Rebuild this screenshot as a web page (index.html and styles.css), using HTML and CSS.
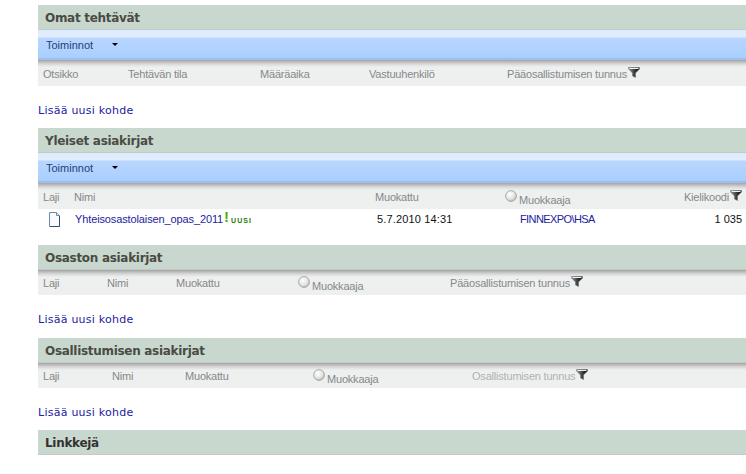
FILE: index.html
```html
<!DOCTYPE html>
<html lang="fi">
<head>
  <meta charset="UTF-8">
  <meta name="viewport" content="width=device-width, initial-scale=1.0">
  <title>Omat tehtävät</title>
  <link rel="stylesheet" href="styles.css">
</head>
<body>
  <svg class="defs" width="0" height="0">
    <defs>
      <linearGradient id="funnelFill" x1="0" y1="0" x2="1" y2="0">
        <stop offset="0" stop-color="#9a9a9a"/>
        <stop offset="0.5" stop-color="#444"/>
        <stop offset="1" stop-color="#000"/>
      </linearGradient>
      <radialGradient id="knobFill" cx="0.4" cy="0.35" r="0.7">
        <stop offset="0" stop-color="#fff"/>
        <stop offset="0.6" stop-color="#e4e4e4"/>
        <stop offset="1" stop-color="#b5b5b5"/>
      </radialGradient>
      <symbol id="funnel" viewBox="0 0 12 11">
        <path d="M0.5 0.5H11.5V2L7.5 6V10.5L4.5 9V6L0.5 2Z" fill="url(#funnelFill)" stroke="#666" stroke-width="0.5"/>
        <path d="M1.5 1H10.5V2H1.5Z" fill="#f2f2f2"/>
      </symbol>
      <symbol id="knob" viewBox="0 0 12 12">
        <circle cx="6" cy="6" r="5.4" fill="url(#knobFill)" stroke="#9a9a9a" stroke-width="0.8"/>
      </symbol>
    </defs>
  </svg>

  <section class="webpart">
    <h2 class="title">Omat tehtävät</h2>
    <div class="toolbar"><span class="menu">Toiminnot</span><span class="arrow"></span></div>
    <div class="cols cols-tasks">
      <span>Otsikko</span>
      <span>Tehtävän tila</span>
      <span>Määräaika</span>
      <span>Vastuuhenkilö</span>
      <span>Pääosallistumisen tunnus<svg class="funnel"><use href="#funnel"/></svg></span>
    </div>
    <a class="add" href="#">Lisää uusi kohde</a>
  </section>

  <section class="webpart">
    <h2 class="title">Yleiset asiakirjat</h2>
    <div class="toolbar"><span class="menu">Toiminnot</span><span class="arrow"></span></div>
    <div class="cols cols-general">
      <span>Laji</span>
      <span>Nimi</span>
      <span>Muokattu</span>
      <span class="editor"><svg class="knob"><use href="#knob"/></svg><span>Muokkaaja</span></span>
      <span class="right">Kielikoodi<svg class="funnel"><use href="#funnel"/></svg></span>
    </div>
    <div class="row cols-general">
      <svg class="doc" viewBox="0 0 13 15" width="13" height="15">
        <path d="M1.5 0.5H8.5L11.5 3.5V14.5H1.5Z" fill="#f8fafd" stroke="#6f88a8"/>
        <path d="M8.5 0.5V3.5H11.5" fill="#dfe8f2" stroke="#6f88a8"/>
        <path d="M11.5 4V14.5H2" fill="none" stroke="#2f4f78"/>
      </svg>
      <span class="name"><a href="#">Yhteisosastolaisen_opas_2011</a><span class="new"><b>!</b>UUSI</span></span>
      <span class="date">5.7.2010 14:31</span>
      <a class="user" href="#">FINNEXPO\HSA</a>
      <span class="right code">1 035</span>
    </div>
  </section>

  <section class="webpart">
    <h2 class="title">Osaston asiakirjat</h2>
    <div class="cols cols-dept flush">
      <span>Laji</span>
      <span>Nimi</span>
      <span>Muokattu</span>
      <span class="editor"><svg class="knob"><use href="#knob"/></svg><span>Muokkaaja</span></span>
      <span>Pääosallistumisen tunnus<svg class="funnel"><use href="#funnel"/></svg></span>
    </div>
    <a class="add add-tall" href="#">Lisää uusi kohde</a>
  </section>

  <section class="webpart">
    <h2 class="title">Osallistumisen asiakirjat</h2>
    <div class="cols cols-part flush">
      <span>Laji</span>
      <span>Nimi</span>
      <span>Muokattu</span>
      <span class="editor"><svg class="knob"><use href="#knob"/></svg><span>Muokkaaja</span></span>
      <span class="dim">Osallistumisen tunnus<svg class="funnel"><use href="#funnel"/></svg></span>
    </div>
    <a class="add" href="#">Lisää uusi kohde</a>
  </section>

  <section class="webpart">
    <h2 class="title title-dark">Linkkejä</h2>
  </section>
</body>
</html>
```

FILE: styles.css
```css
body {
  margin: 0;
  padding: 5px 0 0 38px;
  background-color: #fff;
  font-family: "Liberation Sans", Arial, sans-serif;
  font-size: 11px;
  overflow: hidden;
}

.defs {
  position: absolute;
}

a {
  color: #2222a0;
  text-decoration: none;
}

.title {
  height: 25px;
  margin: 0;
  padding: 2px 0 0 7px;
  background-color: #c9d8ce;
  border-bottom: 1px solid #c4c8c6;
  box-sizing: border-box;
  color: #4b4b45;
  font-family: "DejaVu Sans", Verdana, sans-serif;
  font-size: 12px;
  font-weight: bold;
  letter-spacing: -0.3px;
  line-height: 23px;
}

.title-dark {
  color: #333;
}

.toolbar {
  display: flex;
  align-items: center;
  height: 30px;
  padding: 0 0 0 8px;
  background: linear-gradient(#dcebfe 0, #e2edfe 7px, #b9d6fe 8px, #a9cfff 28px, #a9cfff 28px, #7fb0ee 29px, #ccd 30px);
  box-sizing: border-box;
}

.menu {
  width: 66px;
  color: #1f3f78;
  font-size: 11px;
}

.arrow {
  width: 0;
  height: 0;
  margin-top: -2px;
  border-top: 3px solid #000;
  border-left: 3px solid transparent;
  border-right: 3px solid transparent;
}

.cols {
  display: grid;
  height: 26px;
  padding-left: 5px;
  background: linear-gradient(#a3a3a3 0, #d8d8d8 4px, #eef0ef 7px);
  box-sizing: border-box;
  color: #85888a;
  letter-spacing: -0.2px;
  line-height: 14px;
  padding-top: 7px;
  white-space: nowrap;
}

.flush {
  height: 25px;
  padding-top: 6px;
}

.cols-tasks {
  grid-template-columns: 85px 132px 109px 138px 1fr;
}

.cols-general {
  grid-template-columns: 31px 301px 130px 1fr 120px;
}

.cols-dept {
  grid-template-columns: 64px 69px 122px 152px 1fr;
}

.cols-part {
  grid-template-columns: 69px 73px 128px 159px 1fr;
}

.funnel {
  width: 12px;
  height: 11px;
  margin-left: 1px;
  vertical-align: 0;
}

.knob {
  width: 12px;
  height: 12px;
  margin-right: 2px;
}

.editor {
  display: flex;
  align-items: flex-start;
}

.editor span {
  margin-top: 3px;
}

.right {
  padding-right: 4px;
  text-align: right;
}

.dim {
  color: #adb0b2;
}

.row {
  display: grid;
  height: 36px;
  padding-left: 5px;
  box-sizing: border-box;
  padding-top: 3px;
  line-height: 14px;
  white-space: nowrap;
}

.doc {
  margin: 0 0 0 5px;
}

.name {
  padding-left: 1px;
  letter-spacing: -0.12px;
}

.new {
  color: #1f7a00;
  font-size: 7px;
  font-weight: bold;
  letter-spacing: 1px;
}

.new b {
  position: relative;
  top: -1px;
  margin: 0 1px;
  color: #4cae10;
  font-size: 15px;
  line-height: 10px;
}

.date,
.code {
  color: #111;
  padding-left: 2px;
  letter-spacing: 0.15px;
}

.code {
  letter-spacing: 0;
}

.user {
  padding-left: 15px;
  letter-spacing: -0.6px;
}

.add {
  display: block;
  height: 42px;
  box-sizing: border-box;
  padding-top: 18px;
  font-family: "DejaVu Sans", Verdana, sans-serif;
  font-size: 11px;
  letter-spacing: 0.25px;
  line-height: 14px;
}

.add-tall {
  height: 43px;
}
```
